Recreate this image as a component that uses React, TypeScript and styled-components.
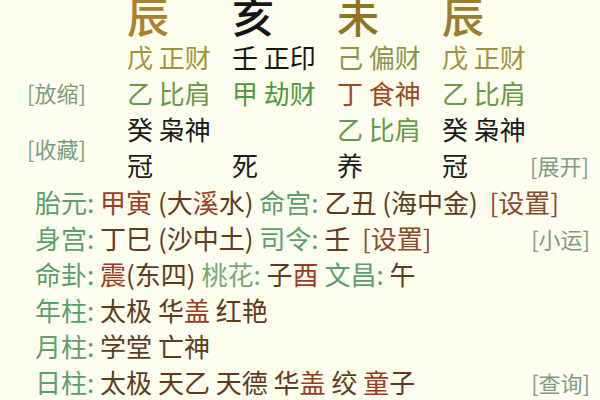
import React from "react";
import styled, { createGlobalStyle } from "styled-components";

const Global = createGlobalStyle`
  html, body { margin: 0; padding: 0; background: #fefeee; }
  body { font-family: "Noto Sans CJK SC", "Noto Sans", sans-serif; }
`;

const Page = styled.div`
  width: 600px;
  height: 400px;
  overflow: hidden;
  background: #fefeee;
  display: flex;
  flex-direction: column;
`;

const Top = styled.div`
  display: flex;
  margin-top: -6px;
`;

const SideCol = styled.div`
  width: 100px;
  padding-left: 27px;
  padding-top: 80px;
  display: flex;
  flex-direction: column;
  gap: 20px;
`;

const Tag = styled.span`
  font-size: 22px;
  line-height: 36px;
  color: #7d9c82;
  white-space: nowrap;
`;

const Pillars = styled.div`
  display: grid;
  grid-template-columns: 105px 105px 105px 88px;
  grid-auto-rows: 36px;
  grid-template-rows: 45px;
`;

const Big = styled.div<{ $c: string }>`
  font-size: 42px;
  line-height: 42px;
  font-weight: 500;
  color: ${(p) => p.$c};
`;

const Cell = styled.div<{ $c: string }>`
  font-size: 26px;
  line-height: 36px;
  color: ${(p) => p.$c};
  white-space: nowrap;
`;

const RightCol = styled.div`
  display: flex;
  flex-direction: column;
  justify-content: flex-end;
`;

const Lines = styled.div`
  display: flex;
  flex-direction: column;
  margin-top: 1px;
`;

const Line = styled.div`
  display: flex;
  justify-content: space-between;
  align-items: center;
  padding: 0 10px 0 35px;
  height: 36px;
`;

const Text = styled.div`
  font-size: 26px;
  line-height: 36px;
  white-space: pre;
`;

const C = styled.span<{ $c: string }>`
  color: ${(p) => p.$c};
`;

const GREEN = "#5b9f6c";
const BROWN = "#5e3a1e";
const RED = "#9a3c22";
const SET = "#8a4a30";

const bigChars = [
  { t: "辰", c: "#a8822c" },
  { t: "亥", c: "#141414" },
  { t: "未", c: "#8f7424" },
  { t: "辰", c: "#9c7c30" },
];

const rows: { t: string; c: string }[][] = [
  [
    { t: "戊 正财", c: "#a3923f" },
    { t: "壬 正印", c: "#151515" },
    { t: "己 偏财", c: "#8a9450" },
    { t: "戊 正财", c: "#a3923f" },
  ],
  [
    { t: "乙 比肩", c: "#68994a" },
    { t: "甲 劫财", c: "#4d993c" },
    { t: "丁 食神", c: "#9c4820" },
    { t: "乙 比肩", c: "#68994a" },
  ],
  [
    { t: "癸 枭神", c: "#1a1a1a" },
    { t: "", c: "#1a1a1a" },
    { t: "乙 比肩", c: "#68994a" },
    { t: "癸 枭神", c: "#1a1a1a" },
  ],
  [
    { t: "冠", c: "#1a1a1a" },
    { t: "死", c: "#1a1a1a" },
    { t: "养", c: "#1a1a1a" },
    { t: "冠", c: "#1a1a1a" },
  ],
];

export default function App() {
  return (
    <Page>
      <Global />
      <Top>
        <SideCol>
          <Tag>[放缩]</Tag>
          <Tag>[收藏]</Tag>
        </SideCol>
        <Pillars>
          {bigChars.map((b, i) => (
            <Big key={i} $c={b.c}>
              {b.t}
            </Big>
          ))}
          {rows.flat().map((r, i) => (
            <Cell key={i} $c={r.c}>
              {r.t}
            </Cell>
          ))}
        </Pillars>
        <RightCol>
          <Tag>[展开]</Tag>
        </RightCol>
      </Top>
      <Lines>
        <Line>
          <Text>
            <C $c={GREEN}>胎元: </C>
            <C $c={RED}>甲寅 </C>
            <C $c={BROWN}>(大</C>
            <C $c={RED}>溪</C>
            <C $c={BROWN}>水) </C>
            <C $c={GREEN}>命宫: </C>
            <C $c={BROWN}>乙丑 (海中金)  </C>
            <C $c={SET}>[设置]</C>
          </Text>
        </Line>
        <Line>
          <Text>
            <C $c={GREEN}>身宫: </C>
            <C $c={BROWN}>丁巳 (沙中土) </C>
            <C $c={GREEN}>司令: </C>
            <C $c={BROWN}>壬  </C>
            <C $c={SET}>[设置]</C>
          </Text>
          <Tag>[小运]</Tag>
        </Line>
        <Line>
          <Text>
            <C $c={GREEN}>命卦: </C>
            <C $c={RED}>震</C>
            <C $c={BROWN}>(东四) </C>
            <C $c="#74ab74">桃花: </C>
            <C $c={BROWN}>子</C>
            <C $c={RED}>酉 </C>
            <C $c={GREEN}>文昌: </C>
            <C $c={BROWN}>午</C>
          </Text>
        </Line>
        <Line>
          <Text>
            <C $c={GREEN}>年柱: </C>
            <C $c={BROWN}>太极 华</C>
            <C $c={RED}>盖 </C>
            <C $c={BROWN}>红艳</C>
          </Text>
        </Line>
        <Line>
          <Text>
            <C $c={GREEN}>月柱: </C>
            <C $c={BROWN}>学堂 亡神</C>
          </Text>
        </Line>
        <Line>
          <Text>
            <C $c={GREEN}>日柱: </C>
            <C $c={BROWN}>太极 天乙 天德 华</C>
            <C $c={RED}>盖 </C>
            <C $c={BROWN}>绞 </C>
            <C $c={RED}>童</C>
            <C $c={BROWN}>子</C>
          </Text>
          <Tag>[查询]</Tag>
        </Line>
      </Lines>
    </Page>
  );
}
